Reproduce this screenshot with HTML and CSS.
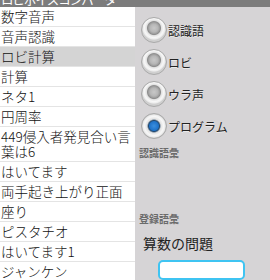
FILE: index.html
```html
<!DOCTYPE html>
<html>
<head>
<meta charset="utf-8">
<link rel="stylesheet" href="styles.css">
</head>
<body>
<div class="titlebar"><span class="title">ロビボイスコンバータ</span></div>
<div class="main">
  <ul class="list">
    <li class="row">数字音声</li>
    <li class="row">音声認識</li>
    <li class="row selected">ロビ計算</li>
    <li class="row">計算</li>
    <li class="row">ネタ1</li>
    <li class="row">円周率</li>
    <li class="row">449侵入者発見合い言<br>葉は6</li>
    <li class="row">はいてます</li>
    <li class="row">両手起き上がり正面</li>
    <li class="row">座り</li>
    <li class="row">ピスタチオ</li>
    <li class="row">はいてます1</li>
    <li class="row">ジャンケン</li>
  </ul>
  <div class="panel">
    <div class="radios">
      <div class="radio"><span class="dot"></span><span class="label">認識語</span></div>
      <div class="radio"><span class="dot"></span><span class="label">ロビ</span></div>
      <div class="radio"><span class="dot"></span><span class="label">ウラ声</span></div>
      <div class="radio checked"><span class="dot"></span><span class="label">プログラム</span></div>
    </div>
    <div class="caption cap1">認識語彙</div>
    <div class="spacer"></div>
    <div class="caption cap2">登録語彙</div>
    <div class="value">算数の問題</div>
    <div class="btnwrap"><div class="button"></div></div>
  </div>
</div>
</body>
</html>
```
FILE: styles.css
```css
html, body {
  margin: 0;
  padding: 0;
}
body {
  width: 270px;
  height: 280px;
  overflow: hidden;
  font-family: "Noto Sans CJK JP", "Noto Sans", sans-serif;
  background: #d6d4d6;
}
.titlebar {
  height: 7px;
  background: #7c7c7c;
  overflow: hidden;
}
.title {
  display: block;
  color: #fff;
  font-size: 12.5px;
  line-height: 12px;
  margin-top: -6px;
  padding-left: 1px;
  white-space: nowrap;
  letter-spacing: -1px;
}
.main {
  display: flex;
  height: 273px;
}
.list {
  list-style: none;
  margin: 0;
  padding: 0;
  width: 135px;
  background: #fff;
  overflow: hidden;
  flex: none;
}
.row {
  font-size: 13.5px;
  font-weight: 300;
  line-height: 15px;
  padding: 2px 0 2px 1px;
  border-bottom: 1px solid #e4e4e4;
  color: #111;
  white-space: nowrap;
}
.row.selected {
  background: #d4d4d4;
}
.panel {
  flex: 1;
  display: flex;
  flex-direction: column;
  padding: 7px 0 0 6px;
  overflow: hidden;
}
.radio {
  height: 32px;
  display: flex;
  align-items: center;
}
.dot {
  width: 26px;
  height: 26px;
  border-radius: 50%;
  box-sizing: border-box;
  border: 1px solid #a9a9a9;
  background: radial-gradient(circle at 50% 42%, #c8c8c8 0, #b6b6b6 4px, #a0a0a0 5.5px, #8e8e8e 6.5px, #e2e2e2 7.5px, #f7f7f7 9.5px, #ececec 11px, #cfcfcf 12px);
  flex: none;
}
.radio.checked .dot {
  background: radial-gradient(circle at 50% 50%, #3a8fe0 0, #1f72c8 4.5px, #23496e 5.5px, #e2e2e2 7px, #f7f7f7 9.5px, #ececec 11px, #cfcfcf 12px);
}
.label {
  font-size: 12px;
  color: #222;
  margin-left: 1px;
  text-shadow: 0 1px 0 rgba(255,255,255,0.5);
}
.caption {
  font-size: 10px;
  font-weight: bold;
  color: #6b6b6b;
  line-height: 12px;
  margin-left: -2px;
}
.cap1 {
  margin-top: 5px;
}
.spacer {
  height: 84px;
}
.value {
  font-size: 14px;
  line-height: 16px;
  color: #222;
  margin-top: 10px;
  margin-left: 2px;
}
.btnwrap {
  margin-top: 9px;
  padding-left: 17px;
}
.button {
  width: 87px;
  height: 20px;
  box-sizing: border-box;
  border: 2px solid #3fc4f2;
  border-radius: 5px;
  background: #fff;
}
```
